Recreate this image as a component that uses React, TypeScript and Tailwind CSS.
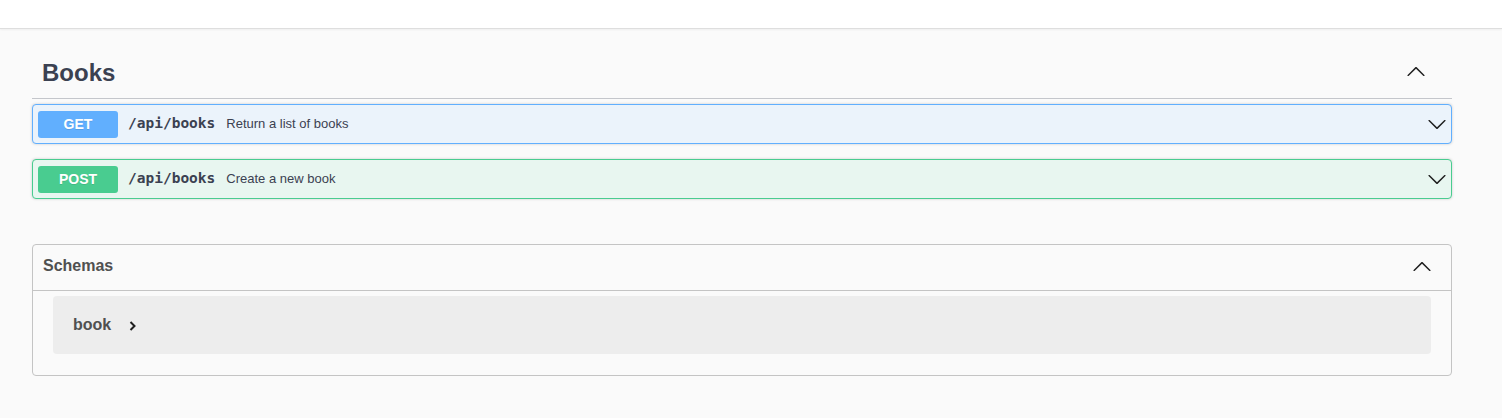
import React from "react";

const Chevron = ({ up = false, className = "" }: { up?: boolean; className?: string }) => (
  <svg width="20" height="20" viewBox="0 0 20 20" className={className} style={up ? { transform: "rotate(180deg)" } : undefined}>
    <path
      fill="#1f1f1f"
      d="M17.418 6.109c.272-.268.709-.268.979 0s.271.701 0 .969l-7.908 7.83c-.27.268-.707.268-.979 0l-7.908-7.830c-.27-.268-.27-.701 0-.969.271-.268.709-.268.979 0L10 13.25l7.418-7.141z"
    />
  </svg>
);

const Op = ({
  method,
  desc,
  badge,
  bg,
  border,
}: {
  method: string;
  desc: string;
  badge: string;
  bg: string;
  border: string;
}) => (
  <div className={`h-[40px] rounded-[4px] border ${border} ${bg} shadow-[0_0_3px_rgba(0,0,0,0.19)] flex items-center px-[5px]`}>
    <div
      className={`w-[80px] h-[27px] rounded-[3px] ${badge} flex items-center justify-center text-white font-bold text-[14px] [text-shadow:0_1px_0_rgba(0,0,0,0.1)]`}
      style={{ fontFamily: '"Liberation Sans", Arial, sans-serif' }}
    >
      {method}
    </div>
    <div
      className="ml-[10px] text-[14.5px] font-bold text-[#3b4151]"
      style={{ fontFamily: '"DejaVu Sans Mono", "Liberation Mono", monospace' }}
    >
      /api/books
    </div>
    <div className="ml-[11px] text-[13px] text-[#3b4151]" style={{ fontFamily: '"Liberation Sans", Arial, sans-serif' }}>
      {desc}
    </div>
    <div className="flex-1" />
    <Chevron className="mr-[-1px]" />
  </div>
);

export default function App() {
  return (
    <div className="w-[1502px] h-[418px] bg-[#fafafa] overflow-hidden" style={{ fontFamily: '"Liberation Sans", Arial, sans-serif' }}>
      <div className="h-[29px] bg-white border-b border-[#dedede] shadow-[0_1px_2px_rgba(0,0,0,0.05)]" />
      <div className="ml-[32px] w-[1420px] pt-[20px]">
        <div className="h-[50px] border-b border-[#c4c6cb] flex items-center pl-[10px] pr-[26px]">
          <h3 className="text-[24px] font-bold text-[#3b4151] mt-[-2px]">Books</h3>
          <div className="flex-1" />
          <Chevron up className="mt-[-4px]" />
        </div>
        <div className="mt-[5px] flex flex-col gap-[15px]">
          <Op method="GET" desc="Return a list of books" badge="bg-[#61affe]" bg="bg-[#ebf3fb]" border="border-[#61affe]" />
          <Op method="POST" desc="Create a new book" badge="bg-[#49cc90]" bg="bg-[#e8f6f0]" border="border-[#49cc90]" />
        </div>
        <div className="mt-[45px] h-[132px] rounded-[4px] border border-[#c4c4c4] flex flex-col">
          <div className="h-[46px] border-b border-[#c4c4c4] flex items-center pl-[10px] pr-[19px]">
            <span className="text-[16px] font-bold text-[#505050] mt-[-4px]">Schemas</span>
            <div className="flex-1" />
            <Chevron up className="mt-[-2px]" />
          </div>
          <div className="px-[20px] pt-[5px]">
            <div className="h-[58px] rounded-[4px] bg-[#ededed] flex items-center pl-[20px]">
              <span className="text-[16px] font-bold text-[#505050]">book</span>
              <svg width="10" height="12" viewBox="0 0 10 12" className="ml-[17px] mt-[2px]">
                <path d="M2.5 2 L6.5 6 L2.5 10" fill="none" stroke="#1f1f1f" strokeWidth="2" />
              </svg>
            </div>
          </div>
        </div>
      </div>
    </div>
  );
}
